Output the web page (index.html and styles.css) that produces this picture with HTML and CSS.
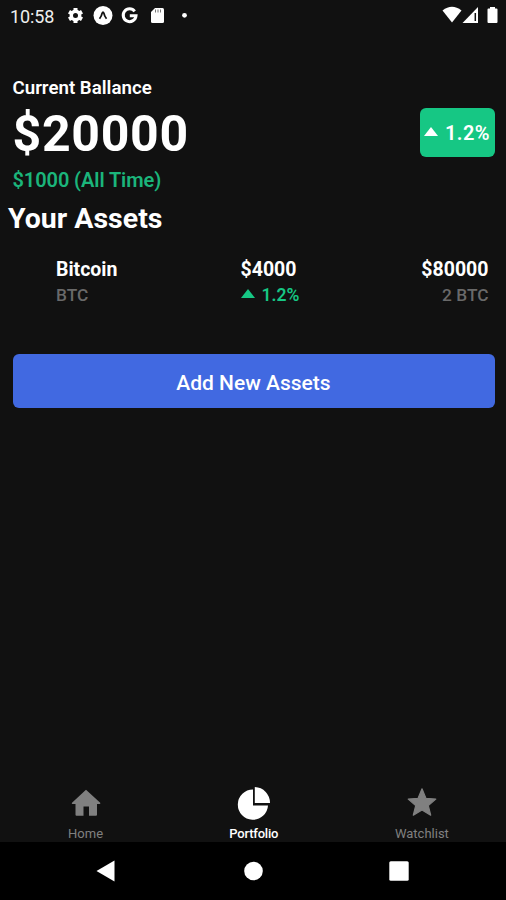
FILE: index.html
```html
<!DOCTYPE html>
<html lang="en">
<head>
<meta charset="utf-8">
<title>Portfolio</title>
<link rel="stylesheet" href="styles.css">
</head>
<body>
<div class="screen">
  <header class="status">
    <span class="clock">10:58</span>
    <svg class="status-left" width="124" height="26" viewBox="0 0 124 26" fill="#fff">
      <g transform="translate(7.5 15.5)">
        <g fill="none" stroke="#fff">
          <circle r="4.200" stroke-width="3.400"/>
          <path stroke-width="4" d="M0-4.500V-7.500M0 4.500V7.500M3.900-2.250L6.500-3.750M3.900 2.250L6.500 3.750M-3.900-2.250L-6.500-3.750M-3.900 2.250L-6.500 3.750"/>
        </g>
      </g>
      <circle cx="35" cy="15.500" r="9.500"/>
      <path d="M31.500 18.800Q33.600 16 34.200 13Q35 11 35.800 13Q36.400 16 38.500 18.800" fill="none" stroke="#111" stroke-width="1.700"/>
      <path d="M66.700 11.300A6.400 6.400 0 1 0 68 15.800H61.800" fill="none" stroke="#fff" stroke-width="3"/>
      <path d="M87 8h7.500q1.500 0 1.500 1.500v12q0 1.500-1.500 1.500h-10q-1.500 0-1.500-1.500V12z"/>
      <path d="M87.500 9.500v3M90 9.500v3M92.500 9.500v3" stroke="#777" stroke-width="1"/>
      <circle cx="116.500" cy="15.300" r="2.400"/>
    </svg>
    <svg class="status-right" width="58" height="26" viewBox="0 0 58 26" fill="#fff">
      <path d="M1.500 10.500Q11 3 20.500 10.500L11 22.500z"/>
      <path d="M37 7V23H21.500z"/>
      <path d="M34.300 13v8" stroke="#111" stroke-width="1.500"/>
      <path d="M47.500 8.500h1.500V7h5v1.500h1.500q1 0 1 1V22q0 1-1 1h-8q-1 0-1-1V9.500q0-1 1-1z"/>
    </svg>
  </header>

  <main class="content">
    <section class="summary">
      <div>
        <p class="label">Current Ballance</p>
        <p class="balance">$20000</p>
        <p class="all-time">$1000 (All Time)</p>
      </div>
      <div class="badge">
        <svg width="14" height="9" viewBox="0 0 14 9"><path d="M0 9L7 0L14 9z" fill="#fff"/></svg>
        <span>1.2%</span>
      </div>
    </section>
    <h1 class="title">Your Assets</h1>
    <section class="asset">
      <div class="coin">
        <p class="strong">Bitcoin</p>
        <p class="muted">BTC</p>
      </div>
      <div class="price">
        <p class="strong">$4000</p>
        <p class="change"><svg width="14" height="9" viewBox="0 0 14 9"><path d="M0 9L7 0L14 9z" fill="#16c784"/></svg><span>1.2%</span></p>
      </div>
      <div class="holding">
        <p class="strong">$80000</p>
        <p class="muted">2 BTC</p>
      </div>
    </section>
    <button class="add">Add New Assets</button>
  </main>

  <nav class="tabs">
    <a class="tab">
      <svg width="34" height="34" viewBox="0 0 34 34" fill="#808080"><path d="M17 1.800L31.200 14.700Q31.800 16 30.500 16H28V26.800Q28 27.800 27 27.800H20V18.500H14.500V27.800H7.500Q6.500 27.800 6.500 26.800V16H3.500Q2.300 16 3 14.700z"/></svg>
      <span>Home</span>
    </a>
    <a class="tab active">
      <svg width="34" height="34" viewBox="0 0 34 34" fill="#fff"><path d="M16 1.500V17.500H31A15.100 15.100 0 1 1 16 1.500z"/><path d="M17.800-1A15.700 15.700 0 0 1 33 15H17.800z"/></svg>
      <span>Portfolio</span>
    </a>
    <a class="tab">
      <svg width="34" height="34" viewBox="0 0 34 34" fill="#808080" stroke="#808080" stroke-width="1.200" stroke-linejoin="round"><path d="M17 0.800L21 10.400L30.800 11.100L23.300 17.600L25.700 27.200L17 22L8.300 27.200L10.700 17.600L3.200 11.100L13 10.400z"/></svg>
      <span>Watchlist</span>
    </a>
  </nav>
  <footer class="system">
    <svg width="20" height="22" viewBox="0 0 20 22"><path d="M.5 11L18.500 .5V21.500z" fill="#fff"/></svg>
    <svg width="20" height="20" viewBox="0 0 20 20"><circle cx="10.500" cy="10" r="9.300" fill="#fff"/></svg>
    <svg width="20" height="20" viewBox="0 0 20 20"><rect x=".3" y=".3" width="19.400" height="19.400" rx="1.500" fill="#fff"/></svg>
  </footer>
</div>
</body>
</html>
```
FILE: styles.css
```css
* { box-sizing: border-box; }
body { margin: 0; background: #111; color: #fff; font-family: Roboto, "Liberation Sans", sans-serif; }
p, h1 { margin: 0; white-space: nowrap; }
svg { display: block; flex: none; overflow: visible; }
.screen { width: 506px; height: 900px; display: flex; flex-direction: column; background: #111; }

.status { height: 32px; display: flex; align-items: flex-start; padding: 0 7px 0 10px; }
.clock { width: 58px; font-size: 18px; line-height: 33px; color: #eee; letter-spacing: -0.1px; }
.status-right { margin-left: auto; }

.content { flex: 1; }
.summary { display: flex; justify-content: space-between; padding: 45px 11.5px 0 12.5px; }
.label { font-size: 18.7px; font-weight: 600; line-height: 23px; }
.balance { font-size: 50px; font-weight: 700; line-height: 69px; letter-spacing: 0.7px; }
.all-time { font-size: 20px; font-weight: 600; line-height: 23px; color: #1bb57b; letter-spacing: -0.08px; }
.badge { display: flex; align-items: center; justify-content: center; gap: 7px; width: 75px; height: 49px; margin-top: 31px; border-radius: 6px; background: #16c784; font-size: 20px; font-weight: 600; letter-spacing: 0.4px; }
.badge svg { margin-top: -3px; }
.badge span { margin-top: 1px; }
.title { margin-left: 8px; font-size: 28.5px; line-height: 36px; padding-top: 9px; }

.asset { display: flex; margin-top: 20px; padding: 0 17.5px 0 56px; }
.coin { width: 184.5px; }
.strong { font-size: 19.5px; font-weight: 700; line-height: 26px; }
.muted { font-size: 17.3px; font-weight: 500; line-height: 24px; color: #696969; }
.holding { margin-left: auto; text-align: right; }
.change { display: flex; align-items: center; gap: 7px; font-size: 17.5px; font-weight: 600; line-height: 24px; color: #16c784; }
.change svg { margin-top: -3px; }
.add { display: block; width: 482px; height: 54px; margin: 47px 0 0 12.5px; padding: 3px 0 0; border: 0; border-radius: 6px; background: #4169e1; color: #fff; font: 500 21px Roboto, sans-serif; }

.tabs { height: 56px; display: flex; padding-left: 1.500px; }
.tab { flex: 1; display: flex; flex-direction: column; align-items: center; color: #808080; font-size: 13px; line-height: 16px; padding-top: 2px; }
.tab span { margin-top: 4px; }
.tab.active { color: #fff; font-weight: 500; }
.tab.active span { letter-spacing: -0.2px; }
.system { height: 58px; display: flex; align-items: center; justify-content: space-between; padding: 0 97px 0 96px; background: #000; }
```
